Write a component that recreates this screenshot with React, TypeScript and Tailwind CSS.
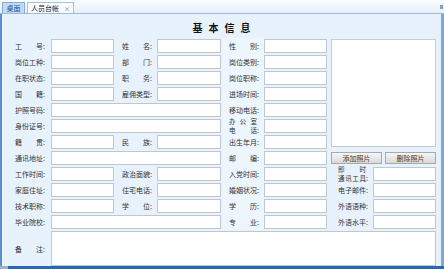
import React from 'react';

const font = { fontFamily: '"Noto Sans CJK SC", "Noto Sans", sans-serif' };

const Label: React.FC<{ text: string; line2?: string; className?: string }> = ({ text, line2, className }) => {
  const chars = (s: string) => (
    <span className="flex w-[28px] justify-between">
      {s.split('').map((c, i) => (
        <span key={i}>{c}</span>
      ))}
    </span>
  );
  if (line2) {
    // two-line label squeezed into a 16px row
    return (
      <div className={`flex h-4 flex-col items-end justify-center pr-[2px] text-[6.5px] leading-[9px] text-[#333] ${className ?? ''}`}>
        <div className="flex h-[9px] shrink-0 pr-[5px]">{chars(text)}</div>
        <div className="flex h-[9px] shrink-0">
          {chars(line2)}
          <span className="w-[5px]">:</span>
        </div>
      </div>
    );
  }
  return (
    <div className={`flex h-4 items-center justify-end pr-[2px] text-[7px] leading-none text-[#333] ${className ?? ''}`}>
      {chars(text)}
      <span className="w-[5px]">:</span>
    </div>
  );
};

const Field: React.FC<{ className?: string }> = ({ className }) => (
  <div className={`flex h-4 items-center ${className ?? ''}`}>
    <div className="h-[14px] w-full border border-[#bfc7cf] bg-white" />
  </div>
);

const Input: React.FC<{ w: string }> = ({ w }) => (
  <div className={`flex h-4 items-center ${w}`}>
    <div className="h-[14px] w-full border border-[#bfc7cf] bg-white" />
  </div>
);

export default function App() {
  return (
    <div className="h-[269px] w-[444px] overflow-hidden bg-[#e8f2fc]" style={font}>
      {/* tab strip */}
      <div className="relative flex h-[14px] items-end gap-[2px] border-b border-[#9cb9dc] bg-gradient-to-b from-[#fbfdff] to-[#e6eef8] pl-[2px]">
        <div className="flex h-[11px] w-[23px] items-center justify-center border border-b-0 border-[#86acdd] bg-[#c4d9f2] text-[7px] text-[#1e4f94]">
          桌面
        </div>
        <div className="flex h-[11px] w-[47px] items-center justify-center gap-[5px] border border-b-0 border-[#a6c0e2] bg-[#f9fbfe] text-[7px] text-[#222]">
          <span>人员台帐</span>
          <span className="text-[6px] text-[#666]">×</span>
        </div>
        <div className="absolute right-[1px] top-[5px] h-[4px] w-[3px] bg-[#7d9fd6]" />
      </div>

      <div className="flex h-[252px] flex-col border-l-2 border-r-[3px] border-l-[#5b8ed0] border-r-[#7fa6d8]">
        {/* title */}
        <div className="flex h-[24px] items-center justify-center pb-[3px] pt-[7px]">
          <span className="pl-[6px] text-[10px] font-bold leading-none tracking-[6px] text-[#111]">基本信息</span>
        </div>

        <div className="grid grid-cols-[36px_66px_41px_65px_42px_65px_108px] grid-rows-[repeat(12,16px)_36px] pl-[12px]">
          {/* row 1 */}
          <Label text="工号" />
          <Field className="pl-px pr-[2px]" />
          <Label text="姓名" />
          <Field className="pr-px" />
          <Label text="性别" className="bg-[#edf5fd]" />
          <Field className="pr-[2px]" />
          <div className="row-span-7 flex pb-[3px] pl-[2px] pr-px pt-px">
            <div className="h-full w-full border border-[#c7cdd4] bg-white" />
          </div>

          {/* row 2 */}
          <Label text="岗位工种" />
          <Field className="pl-px pr-[2px]" />
          <Label text="部门" />
          <Field className="pr-px" />
          <Label text="岗位类别" className="bg-[#edf5fd]" />
          <Field className="pr-[2px]" />

          {/* row 3 */}
          <Label text="在职状态" />
          <Field className="pl-px pr-[2px]" />
          <Label text="职务" />
          <Field className="pr-px" />
          <Label text="岗位职称" className="bg-[#edf5fd]" />
          <Field className="pr-[2px]" />

          {/* row 4 */}
          <Label text="国籍" />
          <Field className="pl-px pr-[2px]" />
          <Label text="雇佣类型" />
          <Field className="pr-px" />
          <Label text="进场时间" className="bg-[#edf5fd]" />
          <Field className="pr-[2px]" />

          {/* row 5 */}
          <Label text="护照号码" />
          <Field className="col-span-3 pl-px pr-px" />
          <Label text="移动电话" className="bg-[#edf5fd]" />
          <Field className="pr-[2px]" />

          {/* row 6 */}
          <Label text="身份证号" />
          <Field className="col-span-3 pl-px pr-px" />
          <Label text="办公室" line2="电话" className="bg-[#edf5fd]" />
          <Field className="pr-[2px]" />

          {/* row 7 */}
          <Label text="籍贯" />
          <Field className="pl-px pr-[2px]" />
          <Label text="民族" />
          <Field className="pr-px" />
          <Label text="出生年月" className="bg-[#edf5fd]" />
          <Field className="pr-[2px]" />

          {/* row 8 */}
          <Label text="通讯地址" />
          <Field className="col-span-3 pl-px pr-px" />
          <Label text="邮编" className="bg-[#edf5fd]" />
          <Field className="pr-[2px]" />
          <div className="flex h-4 items-center gap-[3px] pl-[2px] pr-px">
            <button className="h-[12px] flex-1 border border-[#a9a9a9] bg-gradient-to-b from-[#f6f6f6] to-[#d9d9d9] text-[7px] leading-none text-[#4a3a2a]">
              添加照片
            </button>
            <button className="h-[12px] flex-1 border border-[#a9a9a9] bg-gradient-to-b from-[#f6f6f6] to-[#d9d9d9] text-[7px] leading-none text-[#4a3a2a]">
              删除照片
            </button>
          </div>

          {/* row 9 */}
          <Label text="工作时间" />
          <Field className="pl-px pr-[2px]" />
          <Label text="政治面貌" />
          <Field className="pr-px" />
          <Label text="入党时间" className="bg-[#edf5fd]" />
          <Field className="pr-[2px]" />
          <div className="flex">
            <Label text="即时" line2="通讯工具" className="w-[44px]" />
            <Input w="flex-1 pr-px" />
          </div>

          {/* row 10 */}
          <Label text="家庭住址" />
          <Field className="pl-px pr-[2px]" />
          <Label text="住宅电话" />
          <Field className="pr-px" />
          <Label text="婚姻状况" className="bg-[#edf5fd]" />
          <Field className="pr-[2px]" />
          <div className="flex">
            <Label text="电子邮件" className="w-[44px]" />
            <Input w="flex-1 pr-px" />
          </div>

          {/* row 11 */}
          <Label text="技术职称" />
          <Field className="pl-px pr-[2px]" />
          <Label text="学位" />
          <Field className="pr-px" />
          <Label text="学历" className="bg-[#edf5fd]" />
          <Field className="pr-[2px]" />
          <div className="flex">
            <Label text="外语语种" className="w-[44px]" />
            <Input w="flex-1 pr-px" />
          </div>

          {/* row 12 */}
          <Label text="毕业院校" />
          <Field className="col-span-3 pl-px pr-px" />
          <Label text="专业" className="bg-[#edf5fd]" />
          <Field className="pr-[2px]" />
          <div className="flex">
            <Label text="外语水平" className="w-[44px]" />
            <Input w="flex-1 pr-px" />
          </div>

          {/* remarks */}
          <div className="flex items-center justify-end pt-[3px]">
            <Label text="备注" />
          </div>
          <div className="col-span-6 pl-px pr-px pt-px">
            <div className="h-[35px] w-full border border-[#bfc7cf] bg-white" />
          </div>
        </div>
      </div>

      {/* status bar */}
      <div className="flex h-[3px] bg-[#2a66b8]">
        <div className="w-[8px] bg-[#9fb3cc]" />
      </div>
    </div>
  );
}
